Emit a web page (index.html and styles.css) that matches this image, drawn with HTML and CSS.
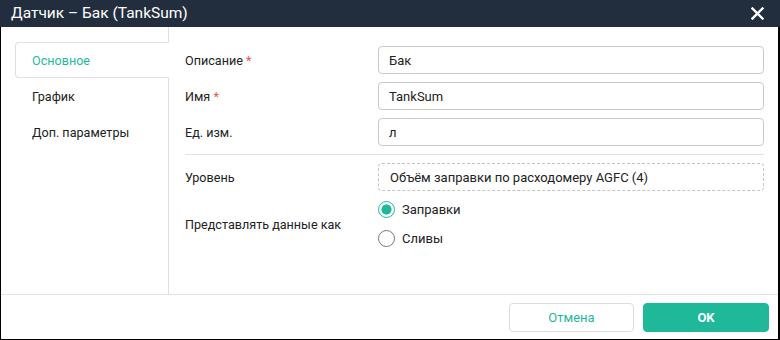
FILE: index.html
```html
<!DOCTYPE html>
<html lang="ru">
<head>
<meta charset="utf-8">
<title>Датчик – Бак (TankSum)</title>
<link rel="stylesheet" href="styles.css">
</head>
<body>
<div class="dialog">
  <div class="header">
    <span class="title">Датчик – Бак (TankSum)</span>
    <button class="close" aria-label="Закрыть">
      <svg width="13" height="13" viewBox="0 0 13 13"><path d="M1.5 1.5L11.5 11.5M11.5 1.5L1.5 11.5" stroke="#fff" stroke-width="2.4" stroke-linecap="square"/></svg>
    </button>
  </div>
  <div class="body">
    <nav class="sidebar">
      <div class="tab active">Основное</div>
      <div class="tab">График</div>
      <div class="tab">Доп. параметры</div>
    </nav>
    <div class="content">
      <div class="row">
        <label class="label">Описание <span class="req">*</span></label>
        <div class="input">Бак</div>
      </div>
      <div class="row">
        <label class="label">Имя <span class="req">*</span></label>
        <div class="input">TankSum</div>
      </div>
      <div class="row">
        <label class="label">Ед. изм.</label>
        <div class="input">л</div>
      </div>
      <div class="divider"></div>
      <div class="row">
        <label class="label">Уровень</label>
        <div class="input dashed">Объём заправки по расходомеру AGFC (4)</div>
      </div>
      <div class="row radios-row">
        <label class="label">Представлять данные как</label>
        <div class="radios">
          <div class="radio-item"><span class="radio checked"></span>Заправки</div>
          <div class="radio-item"><span class="radio"></span>Сливы</div>
        </div>
      </div>
    </div>
  </div>
  <div class="footer">
    <button class="btn cancel">Отмена</button>
    <button class="btn ok">OK</button>
  </div>
</div>
</body>
</html>
```
FILE: styles.css
```css
* { box-sizing: border-box; }
html, body { margin: 0; padding: 0; background: #fff; }
body {
  font-family: Roboto, "Liberation Sans", Arial, sans-serif;
  font-size: 13px;
  color: #222;
}
.dialog {
  width: 780px;
  height: 340px;
  border-left: 1px solid #000;
  border-right: 2px solid #000;
  border-bottom: 1px solid #000;
  display: flex;
  flex-direction: column;
  background: #fff;
}
.header {
  height: 27px;
  background: #222e3e;
  color: #fff;
  display: flex;
  align-items: center;
  justify-content: space-between;
  padding: 0 16px 0 11px;
  margin-left: -1px;
  margin-right: -2px;
}
.title { font-size: 15.5px; line-height: 27px; }
.close {
  background: none;
  border: 0;
  padding: 0;
  width: 13px;
  height: 13px;
  display: flex;
}
.body {
  flex: 1;
  display: flex;
  border-bottom: 1px solid #e2e2e2;
}
.sidebar {
  width: 168px;
  border-right: 1px solid #e0e0e0;
  padding: 15px 0 0 14px;
  flex: none;
  font-size: 12.6px;
}
.tab {
  height: 36px;
  line-height: 36px;
  padding-left: 16px;
  color: #222;
  margin-right: -1px;
  border: 1px solid transparent;
  border-right: 0;
}
.tab.active {
  color: #1fb99a;
  background: #fff;
  border-color: #e0e0e0;
  border-radius: 4px 0 0 4px;
  position: relative;
  margin-right: -1px;
  width: calc(100% + 1px);
}
.content {
  flex: 1;
  padding: 19px 14px 0 16px;
  display: flex;
  flex-direction: column;
  gap: 8px;
}
.row {
  display: flex;
  align-items: center;
}
.label {
  width: 193px;
  flex: none;
  font-size: 12.6px;
}
.req { color: #f0534e; }
.input {
  flex: 1;
  height: 28px;
  border: 1px solid #c9c9c9;
  border-radius: 4px;
  padding: 0 10px;
  display: flex;
  align-items: center;
  color: #222;
}
.input.dashed {
  border: 1px dashed #c4c4c4;
  padding-left: 11px;
}
.divider {
  height: 1px;
  background: #e2e2e2;
}
.radios-row { margin-top: -4px; }
.radios {
  display: flex;
  flex-direction: column;
}
.radio-item {
  height: 29px;
  display: flex;
  align-items: center;
  gap: 7px;
}
.radio {
  width: 17px;
  height: 17px;
  border-radius: 50%;
  border: 1.5px solid #777;
  display: inline-block;
  flex: none;
}
.radio.checked {
  border: 1.5px solid #1fb99a;
  background: radial-gradient(circle, #1fb99a 0 4.8px, #fff 5.3px);
}
.footer {
  height: 44px;
  display: flex;
  justify-content: flex-end;
  align-items: flex-start;
  padding: 8px 9px 0 0;
  gap: 9px;
}
.btn {
  height: 29px;
  width: 126px;
  border-radius: 4px;
  font-family: Roboto, "Liberation Sans", Arial, sans-serif;
  font-size: 13px;
  cursor: pointer;
}
.btn.cancel {
  background: #fff;
  border: 1px solid #dcdcdc;
  color: #1fb99a;
  width: 125px;
}
.btn.ok {
  background: #1fb99a;
  border: 1px solid #1fb99a;
  color: #fff;
  font-weight: bold;
}
```
